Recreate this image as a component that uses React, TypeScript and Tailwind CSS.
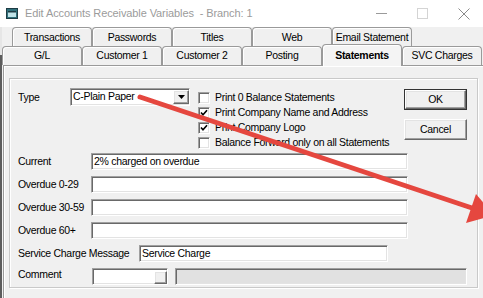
import React from 'react'

const backTabs = ['Transactions', 'Passwords', 'Titles', 'Web', 'Email Statement']
const frontTabs = ['G/L', 'Customer 1', 'Customer 2', 'Posting', 'Statements', 'SVC Charges']

const sunken =
  'border border-t-[#a0a0a0] border-l-[#a0a0a0] border-b-white border-r-white shadow-[inset_1px_1px_0_#696969,inset_-1px_-1px_0_#e3e3e3]'
const raised =
  'border border-t-white border-l-white border-b-[#696969] border-r-[#696969] shadow-[inset_-1px_-1px_0_#a0a0a0,inset_1px_1px_0_#e3e3e3]'

const checks = [
  { label: 'Print 0 Balance Statements', checked: false },
  { label: 'Print Company Name and Address', checked: true },
  { label: 'Print Company Logo', checked: true },
  { label: 'Balance Forward only on all Statements', checked: false },
]

function Checkbox({ checked }: { checked: boolean }) {
  return (
    <div className={`flex h-[12px] w-[12px] shrink-0 items-center justify-center bg-white ${sunken}`}>
      {checked && (
        <svg width="8" height="8" viewBox="0 0 8 8">
          <path d="M1 3.5 L3 5.8 L7 1.2" fill="none" stroke="#000" strokeWidth="1.6" />
        </svg>
      )}
    </div>
  )
}

function Field({ label, labelW, inputW, value }: { label: string; labelW: string; inputW: string; value?: string }) {
  return (
    <div className="flex h-[17px] items-center">
      <span className={`${labelW} shrink-0`}>{label}</span>
      <div className={`${inputW} h-[17px] bg-white pl-[2px] leading-[15px] ${sunken}`}>{value}</div>
    </div>
  )
}

export default function App() {
  return (
    <div className="relative h-[298px] w-[483px] overflow-hidden bg-[#f0f0f0] font-['Liberation_Sans',Arial,sans-serif] text-[10.5px] tracking-[-0.3px] text-black">
      {/* title bar */}
      <div className="flex h-[27px] items-center bg-white">
        <svg className="ml-[6px]" width="13" height="12" viewBox="0 0 13 12">
          <rect x="0.5" y="0.5" width="11" height="10" fill="#2f6f7a" stroke="#1d3c44" />
          <rect x="2" y="3" width="8" height="6" fill="#bfe3e8" />
          <rect x="2" y="3" width="8" height="1.5" fill="#1d3c44" />
        </svg>
        <span className="ml-[6px] whitespace-pre text-[11px] tracking-[-0.1px] text-[#9b9b9b]">
          Edit Accounts Receivable Variables  - Branch: 1
        </span>
        <div className="ml-auto flex items-center">
          <div className="h-px w-[11px] bg-[#9a9a9a]" />
          <div className="ml-[30px] h-[11px] w-[11px] border border-[#d4d4d4]" />
          <svg className="ml-[30px] mr-[13px]" width="12" height="12" viewBox="0 0 12 12">
            <path d="M0.5 0.5 L11.5 11.5 M11.5 0.5 L0.5 11.5" stroke="#8a8a8a" strokeWidth="1" />
          </svg>
        </div>
      </div>

      <div className="flex h-[271px]">
        {/* outer frame edge */}
        <div className="flex w-[2px] flex-col">
          <div className="h-[28px] bg-[#e6e6e6]" />
          <div className="flex-1 bg-[#5c5c5c]" />
        </div>

        <div className="flex flex-1 flex-col">
          {/* back tab row */}
          <div className="flex h-[19px] pl-[10px]">
            {backTabs.map((t) => (
              <div
                key={t}
                className="flex h-[20px] w-[80px] items-center justify-center rounded-t-[4px] border border-b-0 border-[#9a9a9a] bg-[#f0f0f0] shadow-[inset_1px_1px_0_#fff]"
              >
                {t}
              </div>
            ))}
          </div>
          {/* front tab row */}
          <div className="relative z-10 flex h-[19px] items-end">
            {frontTabs.map((t) => {
              const sel = t === 'Statements'
              return (
                <div
                  key={t}
                  className={`flex w-[80px] shrink-0 items-center justify-center rounded-t-[4px] border border-b-0 border-[#9a9a9a] shadow-[inset_1px_1px_0_#fff] ${
                    sel ? '-mb-px h-[22px] bg-[#f4f4f4] pt-[1px] font-bold' : 'h-[19px] bg-[#f0f0f0]'
                  }`}
                >
                  {t}
                </div>
              )
            })}
          </div>

          {/* panel */}
          <div className="ml-px flex-1 border-l border-t border-[#9a9a9a] pl-[5px] pt-[12px] shadow-[inset_1px_1px_0_#fff]">
            <div className="flex h-[210px] w-[469px] flex-col border border-[#c9c9c9] pl-[8px] pr-[10px] pt-[9px] shadow-[inset_1px_1px_0_#fff,1px_1px_0_#fff]">
              {/* top section */}
              <div className="flex h-[65px] items-start">
                <span className="w-[52px] shrink-0 pt-[2px]">Type</span>
                <div className={`flex h-[18px] w-[120px] items-center bg-white pl-[2px] ${sunken}`}>
                  <span className="flex-1">C-Plain Paper</span>
                  <div className={`flex h-[14px] w-[16px] items-center justify-center bg-[#f0f0f0] ${raised}`}>
                    <svg width="7" height="4" viewBox="0 0 7 4">
                      <path d="M0 0 H7 L3.5 4 Z" fill="#000" />
                    </svg>
                  </div>
                </div>
                <div className="ml-[8px] flex flex-col pt-[2px]">
                  {checks.map((c) => (
                    <div key={c.label} className="flex h-[15px] items-center gap-[5px]">
                      <Checkbox checked={c.checked} />
                      <span>{c.label}</span>
                    </div>
                  ))}
                </div>
                <div className="ml-auto flex flex-col gap-[9px] pt-px">
                  <div className="h-[21px] w-[63px] border border-[#333] bg-[#f0f0f0]">
                    <div className={`flex h-full w-full items-center justify-center ${raised}`}>OK</div>
                  </div>
                  <div className={`flex h-[21px] w-[63px] items-center justify-center bg-[#f0f0f0] ${raised}`}>
                    Cancel
                  </div>
                </div>
              </div>

              {/* message rows */}
              <div className="flex flex-col gap-[6px]">
                <Field label="Current" labelW="w-[73px]" inputW="w-[317px]" value="2% charged on overdue" />
                <Field label="Overdue 0-29" labelW="w-[73px]" inputW="w-[317px]" />
                <Field label="Overdue 30-59" labelW="w-[73px]" inputW="w-[317px]" />
                <Field label="Overdue 60+" labelW="w-[73px]" inputW="w-[317px]" />
                <Field label="Service Charge Message" labelW="w-[121px]" inputW="w-[249px]" value="Service Charge" />
                <div className="flex h-[17px] items-center">
                  <span className="w-[74px] shrink-0 -mt-[3px]">Comment</span>
                  <div className={`flex h-[17px] w-[76px] items-end justify-end bg-white ${sunken}`}>
                    <div className={`h-[13px] w-[13px] bg-[#f0f0f0] ${raised}`} />
                  </div>
                  <div className={`ml-[7px] h-[17px] w-[294px] bg-[#e1e1e1] ${sunken}`} />
                </div>
              </div>
            </div>
          </div>
        </div>
      </div>

      {/* red annotation arrow */}
      <svg className="pointer-events-none absolute inset-0" width="483" height="298" viewBox="0 0 483 298">
        <line x1="140" y1="97" x2="472" y2="208" stroke="#e5473f" strokeWidth="5" strokeLinecap="round" />
        <polygon points="466,223 476,194 494,215" fill="#e5473f" />
      </svg>
    </div>
  )
}
